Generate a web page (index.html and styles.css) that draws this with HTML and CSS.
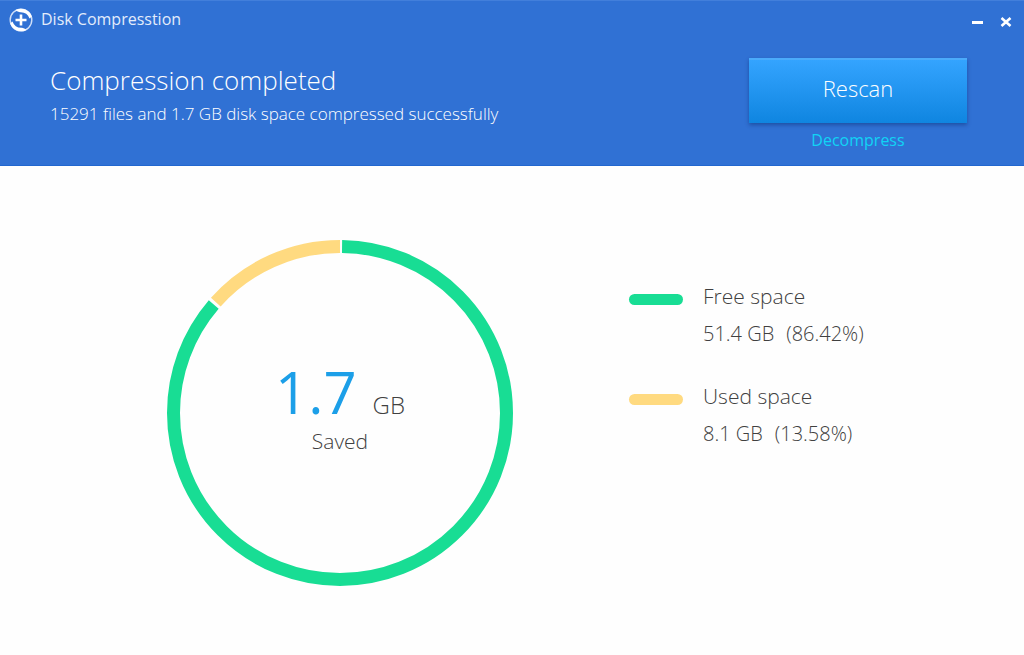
FILE: index.html
```html
<!DOCTYPE html>
<html lang="en">
<head>
    <meta charset="UTF-8">
    <meta name="viewport" content="width=device-width, initial-scale=1.0">
    <title>Disk Compresstion</title>
    <link rel="stylesheet" href="styles.css">
</head>
<body>
    <header class="header">
        <div class="title-bar">
            <svg class="logo" viewBox="0 0 24 24" aria-hidden="true">
                <circle cx="12" cy="12" r="10.8" fill="none" stroke="#cfdff8" stroke-width="1.4"/>
                <path d="M6.5 2A11.5 11.5 0 0 1 22.8 8.5L20.5 10.5A9.5 9.5 0 0 0 11 4.2Q8.5 4 6.5 2Z" fill="#fff"/>
                <path d="M17.5 22A11.5 11.5 0 0 1 1.2 15.5L3.5 13.5A9.5 9.5 0 0 0 13 19.8Q15.5 20 17.5 22Z" fill="#fff"/>
                <path d="M12 6.5v11M6.5 12h11" stroke="#fff" stroke-width="2.6"/>
            </svg>
            <span class="app-name">Disk Compresstion</span>
            <button class="window-button" aria-label="Minimize">
                <svg viewBox="0 0 12 12"><path d="M0 6.5h11" stroke="#fff" stroke-width="3"/></svg>
            </button>
            <button class="window-button" aria-label="Close">
                <svg viewBox="0 0 12 12"><path d="M1.5 2l9 8M10.5 2l-9 8" stroke="#fff" stroke-width="2.6"/></svg>
            </button>
        </div>
        <div class="summary">
            <div class="summary-text">
                <h1>Compression completed</h1>
                <p>15291 files and 1.7 GB disk space compressed successfully</p>
            </div>
            <div class="actions">
                <button class="rescan">Rescan</button>
                <a class="decompress" href="#">Decompress</a>
            </div>
        </div>
    </header>
    <main class="content">
        <div class="chart">
            <svg class="ring" viewBox="0 0 346 346" aria-hidden="true">
                <g fill="none" stroke-width="13" transform="rotate(-90 173 173)">
                    <circle cx="173" cy="173" r="166.5" pathLength="1000" stroke="#18dd94" stroke-dasharray="861 139" stroke-dashoffset="-2"/>
                    <circle cx="173" cy="173" r="166.5" pathLength="1000" stroke="#ffda80" stroke-dasharray="134 866" stroke-dashoffset="-866"/>
                </g>
            </svg>
            <div class="saved">
                <div class="saved-size"><strong>1.7</strong><span>GB</span></div>
                <div class="saved-label">Saved</div>
            </div>
        </div>
        <ul class="legend">
            <li>
                <span class="swatch free"></span>
                <div>
                    <h2>Free space</h2>
                    <p><span>51.4 GB</span><span>(86.42%)</span></p>
                </div>
            </li>
            <li>
                <span class="swatch used"></span>
                <div>
                    <h2>Used space</h2>
                    <p><span>8.1 GB</span><span>(13.58%)</span></p>
                </div>
            </li>
        </ul>
    </main>
</body>
</html>
```
FILE: styles.css
```css
* {
    box-sizing: border-box;
}

body {
    margin: 0;
    background-color: #fefefe;
    color: #404040;
    font-family: "Open Sans", "Noto Sans", sans-serif;
    font-weight: 300;
}

h1, h2, p, ul {
    margin: 0;
    padding: 0;
    font-weight: inherit;
}

button {
    border: none;
    padding: 0;
    font-family: inherit;
    font-weight: inherit;
    cursor: pointer;
}

/* Header */
.header {
    background-color: #3071d4;
    border-top: 1px solid #427fdb;
    border-bottom: 1px solid #2267cf;
    color: #fff;
}

.title-bar {
    display: flex;
    align-items: center;
    height: 38px;
    padding: 0 12px 0 9px;
}

.logo {
    width: 24px;
    height: 24px;
    margin-right: 8px;
}

.app-name {
    flex: 1;
    padding-bottom: 2px;
    color: #e3ecfb;
    font-size: 16px;
    font-weight: 400;
    line-height: 20px;
}

.window-button {
    width: 12px;
    height: 12px;
    margin: 4px 0 0 16px;
    background: none;
}

.window-button svg {
    display: block;
}

.summary {
    display: flex;
    justify-content: space-between;
    padding: 19px 57px 13px 50px;
}

.summary-text {
    padding-top: 4px;
}

.summary h1 {
    font-size: 26px;
    line-height: 36px;
}

.summary p {
    font-size: 17px;
    line-height: 32px;
}

.actions {
    display: flex;
    flex-direction: column;
    align-items: center;
}

.rescan {
    width: 218px;
    height: 65px;
    padding-bottom: 8px;
    background: linear-gradient(#34a4ff, #0f85e0);
    border-top: 2px solid #4babfb;
    box-shadow: 0 2px 4px rgba(0, 30, 90, 0.4);
    color: #fff;
    font-size: 22px;
}

.decompress {
    margin-top: 5px;
    color: #10d4f5;
    font-size: 16px;
    font-weight: 400;
    line-height: 24px;
    text-decoration: none;
}

/* Disk usage */
.content {
    display: flex;
    gap: 116px;
    padding: 74px 40px 60px 167px;
}

.chart {
    display: grid;
    flex: none;
    place-items: center;
}

.ring,
.saved {
    grid-area: 1 / 1;
}

.ring {
    width: 346px;
    height: 346px;
}

.saved {
    padding-bottom: 6px;
    text-align: center;
}

.saved-size {
    display: flex;
    align-items: baseline;
    gap: 16px;
    line-height: 48px;
}

.saved-size strong {
    color: #1c9fe8;
    font-size: 58px;
    font-weight: 400;
}

.saved-size span {
    font-size: 24px;
}

.saved-label {
    font-size: 21px;
    line-height: 24px;
}

.legend {
    padding-top: 40px;
    list-style: none;
}

.legend li {
    display: flex;
    gap: 20px;
    height: 100px;
}

.swatch {
    width: 54px;
    height: 11px;
    margin-top: 14px;
    border-radius: 6px;
}

.free {
    background-color: #18dd94;
}

.used {
    background-color: #ffda80;
}

.legend h2 {
    font-size: 21px;
    line-height: 32px;
}

.legend p {
    display: flex;
    gap: 12px;
    font-size: 20px;
    line-height: 43px;
}
```
